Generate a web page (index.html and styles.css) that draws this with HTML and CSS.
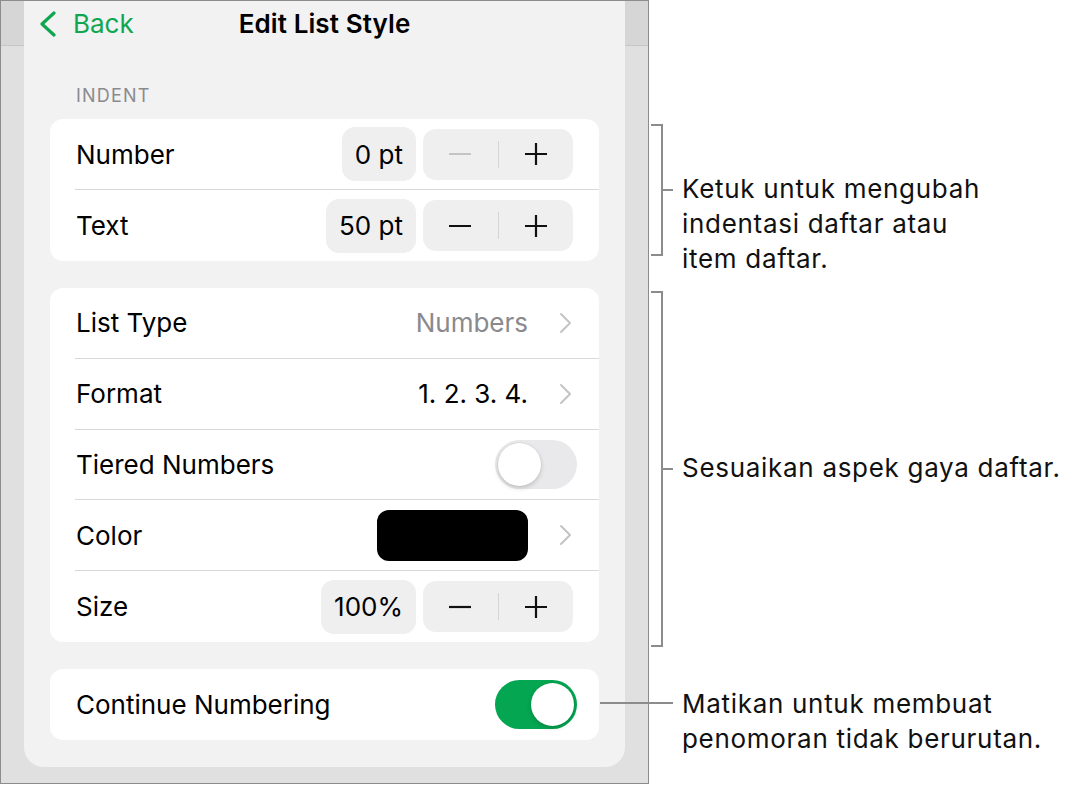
FILE: index.html
```html
<!DOCTYPE html>
<html lang="id">
<head>
<meta charset="utf-8">
<title>Edit List Style</title>
<link rel="stylesheet" href="styles.css">
</head>
<body>
<div class="page">
  <div class="device">
    <div class="panel">
      <header class="nav">
        <div class="back">
          <svg class="back-chev" width="20" height="26" viewBox="0 0 20 26"><polyline points="16,2 4,13 16,24" fill="none" stroke="currentColor" stroke-width="3.2" stroke-linecap="round" stroke-linejoin="round"/></svg>
          <span>Back</span>
        </div>
        <h1 class="title">Edit List Style</h1>
        <div></div>
      </header>

      <div class="section-label">INDENT</div>
      <div class="card">
        <div class="row">
          <div class="row-inner">
            <span class="label">Number</span>
            <div class="controls">
              <span class="value">0 pt</span>
              <div class="stepper">
                <span class="step disabled"><svg width="24" height="24" viewBox="0 0 24 24"><line x1="1" y1="12" x2="23" y2="12" stroke="currentColor" stroke-width="2.2"/></svg></span>
                <span class="step-div"></span>
                <span class="step"><svg width="24" height="24" viewBox="0 0 24 24"><line x1="1" y1="12" x2="23" y2="12" stroke="currentColor" stroke-width="2.2"/><line x1="12" y1="1" x2="12" y2="23" stroke="currentColor" stroke-width="2.2"/></svg></span>
              </div>
            </div>
          </div>
        </div>
        <div class="row">
          <div class="row-inner">
            <span class="label">Text</span>
            <div class="controls">
              <span class="value">50 pt</span>
              <div class="stepper">
                <span class="step"><svg width="24" height="24" viewBox="0 0 24 24"><line x1="1" y1="12" x2="23" y2="12" stroke="currentColor" stroke-width="2.2"/></svg></span>
                <span class="step-div"></span>
                <span class="step"><svg width="24" height="24" viewBox="0 0 24 24"><line x1="1" y1="12" x2="23" y2="12" stroke="currentColor" stroke-width="2.2"/><line x1="12" y1="1" x2="12" y2="23" stroke="currentColor" stroke-width="2.2"/></svg></span>
              </div>
            </div>
          </div>
        </div>
      </div>

      <div class="card card-wide">
        <div class="row">
          <div class="row-inner">
            <span class="label">List Type</span>
            <div class="controls">
              <span class="detail muted">Numbers</span>
              <svg class="chev" width="14" height="22" viewBox="0 0 14 22"><polyline points="3,2 12,11 3,20" fill="none" stroke="currentColor" stroke-width="2" stroke-linecap="round" stroke-linejoin="round"/></svg>
            </div>
          </div>
        </div>
        <div class="row">
          <div class="row-inner">
            <span class="label">Format</span>
            <div class="controls">
              <span class="detail">1. 2. 3. 4.</span>
              <svg class="chev" width="14" height="22" viewBox="0 0 14 22"><polyline points="3,2 12,11 3,20" fill="none" stroke="currentColor" stroke-width="2" stroke-linecap="round" stroke-linejoin="round"/></svg>
            </div>
          </div>
        </div>
        <div class="row">
          <div class="row-inner">
            <span class="label">Tiered Numbers</span>
            <div class="controls">
              <span class="toggle"><span class="knob"></span></span>
            </div>
          </div>
        </div>
        <div class="row">
          <div class="row-inner">
            <span class="label">Color</span>
            <div class="controls">
              <span class="swatch"></span>
              <svg class="chev" width="14" height="22" viewBox="0 0 14 22"><polyline points="3,2 12,11 3,20" fill="none" stroke="currentColor" stroke-width="2" stroke-linecap="round" stroke-linejoin="round"/></svg>
            </div>
          </div>
        </div>
        <div class="row">
          <div class="row-inner">
            <span class="label">Size</span>
            <div class="controls">
              <span class="value">100%</span>
              <div class="stepper">
                <span class="step"><svg width="24" height="24" viewBox="0 0 24 24"><line x1="1" y1="12" x2="23" y2="12" stroke="currentColor" stroke-width="2.2"/></svg></span>
                <span class="step-div"></span>
                <span class="step"><svg width="24" height="24" viewBox="0 0 24 24"><line x1="1" y1="12" x2="23" y2="12" stroke="currentColor" stroke-width="2.2"/><line x1="12" y1="1" x2="12" y2="23" stroke="currentColor" stroke-width="2.2"/></svg></span>
              </div>
            </div>
          </div>
        </div>
      </div>

      <div class="card">
        <div class="row">
          <div class="row-inner">
            <span class="label">Continue Numbering</span>
            <div class="controls">
              <span class="toggle on"><span class="knob"></span></span>
            </div>
          </div>
        </div>
      </div>
    </div>
  </div>

  <div class="notes">
    <div class="callout callout-indent">
      <div class="bracket-group">
        <span class="bracket"></span>
        <span class="tick"></span>
      </div>
      <p class="note note-top">Ketuk untuk mengubah<br>indentasi daftar atau<br>item daftar.</p>
    </div>
    <div class="callout callout-style">
      <div class="bracket-group">
        <span class="bracket"></span>
        <span class="tick"></span>
      </div>
      <p class="note">Sesuaikan aspek gaya daftar.</p>
    </div>
    <div class="callout callout-continue">
      <span class="leader"></span>
      <p class="note">Matikan untuk membuat<br>penomoran tidak berurutan.</p>
    </div>
  </div>
</div>
</body>
</html>
```

FILE: styles.css
```css
* { box-sizing: border-box; }

html, body {
  margin: 0;
  padding: 0;
  background: #ffffff;
}

body {
  font-family: Inter, "Noto Sans", "Liberation Sans", sans-serif;
  color: #000;
  -webkit-font-smoothing: antialiased;
}

.page {
  display: flex;
  align-items: flex-start;
  width: 1065px;
  height: 785px;
}

/* Device frame */
.device {
  width: 649px;
  height: 784px;
  flex: none;
  border: 1px solid #8c8c8c;
  background: linear-gradient(#d6d6d6 0, #d6d6d6 44px, #c6c6c6 44px, #c6c6c6 45px, #e0e0e0 45px);
  padding-left: 23px;
}

.panel {
  width: 601px;
  background: #f2f2f2;
  border-radius: 0 0 20px 20px;
  padding: 0 26px 27px;
}

.nav {
  display: grid;
  grid-template-columns: 1fr auto 1fr;
  align-items: center;
  height: 44px;
  margin: 0 -26px;
  padding: 0 14px;
}

.back {
  display: flex;
  align-items: center;
  color: #0fa650;
  font-size: 26px;
  gap: 15px;
  margin-top: 1px;
}

.back-chev { display: block; }

.title {
  margin: 0;
  font-size: 26px;
  font-weight: 600;
  letter-spacing: 0.1px;
  white-space: nowrap;
}

.section-label {
  font-size: 18px;
  line-height: 20px;
  color: #8a8a8e;
  padding: 41px 0 0 26px;
  margin-bottom: 13px;
  letter-spacing: 1.2px;
}

.card {
  background: #ffffff;
  border-radius: 13px;
  overflow: hidden;
}

.card + .card { margin-top: 27px; }

.row {
  height: 71px;
  padding-left: 25px;
}

.card-wide .row { height: 70.8px; }

.row-inner {
  height: 100%;
  display: flex;
  align-items: center;
  justify-content: space-between;
  padding-left: 1px;
  padding-right: 22px;
  border-bottom: 1px solid #d9d9db;
}

.row:last-child .row-inner { border-bottom: none; }

.label {
  font-size: 26px;
}

.controls {
  display: flex;
  align-items: center;
}

.value {
  height: 54px;
  display: flex;
  align-items: center;
  padding: 0 13px;
  background: #efeff0;
  border-radius: 13px;
  font-size: 26px;
  margin-right: 7px;
}

.stepper {
  display: flex;
  align-items: center;
  width: 150px;
  height: 51px;
  background: #efeff0;
  border-radius: 13px;
  margin-right: 4px;
}

.step {
  flex: 1;
  display: flex;
  align-items: center;
  justify-content: center;
  color: #111;
}

.step svg { display: block; }

.step.disabled { color: #c4c4c6; }

.step-div {
  width: 1px;
  height: 27px;
  background: #d4d4d6;
}

.detail {
  font-size: 26px;
  margin-right: 30px;
}

.detail.muted { color: #8a8a8e; }

.chev {
  display: block;
  color: #c4c4c7;
  margin-right: 5px;
}

.swatch {
  width: 151px;
  height: 51px;
  background: #000;
  border-radius: 12px;
  margin-right: 30px;
}

.toggle {
  width: 82px;
  height: 49px;
  border-radius: 25px;
  background: #e9e9eb;
  padding: 3px;
  display: flex;
}

.knob {
  width: 43px;
  height: 43px;
  border-radius: 50%;
  background: #fff;
  box-shadow: 0 2px 5px rgba(0,0,0,0.18), 0 0 0 0.5px rgba(0,0,0,0.06);
}

.toggle.on {
  background: #04a651;
  justify-content: flex-end;
}

/* Callouts */
.notes {
  flex: 1;
  display: flex;
  flex-direction: column;
  padding-top: 124px;
}

.callout {
  display: flex;
  align-items: center;
}

.bracket-group {
  display: flex;
  align-items: center;
  margin-left: 2px;
}

.bracket {
  width: 12px;
  border: 2px solid #8c8c8c;
  border-left: none;
}

.tick {
  width: 10px;
  height: 2px;
  background: #8c8c8c;
}

.note {
  margin: 0 0 0 9px;
  font-size: 26px;
  line-height: 35px;
  letter-spacing: 0.7px;
  color: #111;
  white-space: nowrap;
}

.callout-indent {
  height: 132px;
  align-items: flex-start;
}

.callout-indent .bracket { height: 132px; }
.callout-indent .note { margin-top: 47px; }

.callout-style {
  margin-top: 35px;
  height: 356px;
}

.callout-style .bracket { height: 356px; }
.callout-style .note { margin-top: -4px; }

.callout-continue {
  margin-top: 39px;
  align-items: flex-start;
}

.leader {
  width: 73px;
  height: 2px;
  margin-left: -49px;
  margin-top: 16px;
  background: #8c8c8c;
  flex: none;
}
```
